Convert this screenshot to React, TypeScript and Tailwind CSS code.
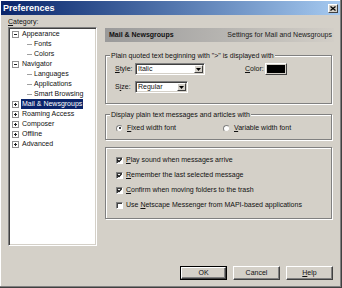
import React from "react";

const U = ({ c }: { c: string }) => <span className="underline underline-offset-[1px]">{c}</span>;

function Expander({ open }: { open: boolean }) {
  return (
    <svg width="7" height="7" viewBox="0 0 7 7" className="shrink-0">
      <rect x="0.5" y="0.5" width="6" height="6" fill="#fff" stroke="#909090" />
      <line x1="2" y1="3.5" x2="5" y2="3.5" stroke="#202020" />
      {!open && <line x1="3.5" y1="2" x2="3.5" y2="5" stroke="#202020" />}
    </svg>
  );
}

type Node = { label: React.ReactNode; level: 0 | 1; open?: boolean; sel?: boolean };

const nodes: Node[] = [
  { label: "Appearance", level: 0, open: true },
  { label: "Fonts", level: 1 },
  { label: "Colors", level: 1 },
  { label: "Navigator", level: 0, open: true },
  { label: "Languages", level: 1 },
  { label: "Applications", level: 1 },
  { label: "Smart Browsing", level: 1 },
  { label: "Mail & Newsgroups", level: 0, open: false, sel: true },
  { label: "Roaming Access", level: 0, open: false },
  { label: "Composer", level: 0, open: false },
  { label: "Offline", level: 0, open: false },
  { label: "Advanced", level: 0, open: false },
];

function TreeRow({ n }: { n: Node }) {
  if (n.level === 0) {
    return (
      <div className="h-[10px] flex items-center pl-[3px]">
        <Expander open={!!n.open} />
        <span
          className={`ml-[2px] px-[1px] leading-[10px] h-[10px] whitespace-nowrap ${
            n.sel ? "bg-[#0a246a] text-white" : ""
          }`}
        >
          {n.label}
        </span>
      </div>
    );
  }
  return (
    <div className="h-[10px] flex items-center pl-[18px]">
      <div className="w-[5px] border-t border-[#a0a0a0]" />
      <span className="ml-[2px] leading-[10px] whitespace-nowrap">{n.label}</span>
    </div>
  );
}

function Select({ value, w }: { value: React.ReactNode; w: string }) {
  return (
    <div
      className={`${w} h-[12px] bg-white border border-t-[#808080] border-l-[#808080] border-b-white border-r-white shadow-[inset_1px_1px_0_#404040,inset_-1px_-1px_0_#d4d0c8] flex items-center`}
    >
      <span className="flex-1 pl-[2px] leading-[10px]">{value}</span>
      <div className="w-[9px] h-[8px] mr-[1px] bg-[#d4d0c8] border border-t-white border-l-white border-b-[#404040] border-r-[#404040] flex items-center justify-center">
        <svg width="5" height="3" viewBox="0 0 5 3">
          <polygon points="0,0 5,0 2.5,3" fill="#000" />
        </svg>
      </div>
    </div>
  );
}

function Check({ checked, children }: { checked: boolean; children: React.ReactNode }) {
  return (
    <div className="h-[15px] flex items-center">
      <div className="w-[7px] h-[7px] bg-white border border-t-[#808080] border-l-[#808080] border-b-white border-r-white shadow-[inset_1px_1px_0_#404040] flex items-center justify-center">
        {checked && (
          <svg width="5" height="5" viewBox="0 0 5 5">
            <polyline points="0.5,2 2,3.6 4.6,0.8" fill="none" stroke="#000" strokeWidth="1.2" />
          </svg>
        )}
      </div>
      <span className="ml-[3px] whitespace-nowrap">{children}</span>
    </div>
  );
}

function Radio({ on, children }: { on: boolean; children: React.ReactNode }) {
  return (
    <div className="flex items-center">
      <div className="w-[7px] h-[7px] rounded-full bg-white border border-t-[#808080] border-l-[#808080] border-b-[#d4d0c8] border-r-[#d4d0c8] flex items-center justify-center">
        {on && <div className="w-[2px] h-[2px] rounded-full bg-black" />}
      </div>
      <span className="ml-[4px] whitespace-nowrap">{children}</span>
    </div>
  );
}

function Button({ children, def }: { children: React.ReactNode; def?: boolean }) {
  return (
    <div className={`h-[14px] w-[47px] ${def ? "border border-black" : ""}`}>
      <div
        className={`w-full h-full bg-[#d4d0c8] border border-t-white border-l-white border-b-[#404040] border-r-[#404040] shadow-[inset_-1px_-1px_0_#808080] flex items-center justify-center leading-[10px]`}
      >
        {children}
      </div>
    </div>
  );
}

function Group({
  legend,
  className,
  children,
}: {
  legend?: React.ReactNode;
  className: string;
  children: React.ReactNode;
}) {
  return (
    <div
      className={`relative border border-[#808080] shadow-[inset_1px_1px_0_#fff,1px_1px_0_#fff] ${className}`}
    >
      {legend && (
        <span className="absolute -top-[5px] left-[4px] px-[1px] bg-[#d4d0c8] leading-[9px] whitespace-nowrap">
          {legend}
        </span>
      )}
      {children}
    </div>
  );
}

export default function App() {
  return (
    <div className="w-[342px] h-[288px] bg-[#d4d0c8] overflow-hidden font-['Liberation_Sans',Arial,sans-serif] text-[7px] text-[#111] border-r border-b border-r-[#404040] border-b-[#404040] shadow-[inset_-1px_-1px_0_#808080,inset_1px_1px_0_#fff] flex flex-col">
      {/* Title bar */}
      <div className="h-[14px] mx-[1px] mt-[1px] bg-gradient-to-r from-[#0a246a] to-[#a6caf0] flex items-center justify-between pl-[2px] pr-[2px]">
        <span className="text-white font-bold text-[9px] leading-[12px]">Preferences</span>
        <div className="w-[10px] h-[9px] bg-[#d4d0c8] border border-t-white border-l-white border-b-[#404040] border-r-[#404040] flex items-center justify-center">
          <svg width="6" height="5" viewBox="0 0 6 5">
            <line x1="0.5" y1="0.5" x2="5.5" y2="4.5" stroke="#000" strokeWidth="1.2" />
            <line x1="5.5" y1="0.5" x2="0.5" y2="4.5" stroke="#000" strokeWidth="1.2" />
          </svg>
        </div>
      </div>

      <div className="flex flex-1">
        {/* Left column */}
        <div className="ml-[8px] w-[89px] pt-[2px] flex flex-col">
          <div className="h-[10px] leading-[10px]">
            <U c="C" />
            ategory:
          </div>
          <div className="h-[219px] bg-white border border-t-[#808080] border-l-[#808080] border-b-white border-r-white shadow-[inset_1px_1px_0_#404040,inset_-1px_-1px_0_#d4d0c8] pt-[1px]">
            {nodes.map((n, i) => (
              <TreeRow key={i} n={n} />
            ))}
          </div>
        </div>

        {/* Right column */}
        <div className="ml-[8px] w-[229px] pt-[13px] flex flex-col">
          <div className="h-[14px] bg-gradient-to-r from-[#9a9a9a] to-[#d2cec7] flex items-center justify-between pl-[4px] pr-[2px]">
            <span className="font-bold text-[#101010]">Mail &amp; Newsgroups</span>
            <span className="text-[#202020]">Settings for Mail and Newsgroups</span>
          </div>

          <Group
            className="mt-[13px] h-[49px] w-[227px] pt-[7px] pl-[9px]"
            legend={<>Plain quoted text beginning with "&gt;" is displayed with</>}
          >
            <div className="flex items-center h-[12px]">
              <span className="w-[20px]">
                <U c="S" />
                tyle:
              </span>
              <Select value="Italic" w="w-[70px]" />
              <span className="ml-[40px] w-[20px]">
                <U c="C" />
                olor:
              </span>
              <div className="w-[22px] h-[12px] bg-[#d4d0c8] border border-t-white border-l-white border-b-[#404040] border-r-[#404040] p-[1px]">
                <div className="w-full h-full bg-black" />
              </div>
            </div>
            <div className="flex items-center h-[12px] mt-[6px]">
              <span className="w-[20px]">
                S<U c="i" />
                ze:
              </span>
              <Select value="Regular" w="w-[53px]" />
            </div>
          </Group>

          <Group
            className="mt-[10px] h-[26px] w-[227px] pl-[10px] pt-[8px]"
            legend="Display plain text messages and articles with"
          >
            <div className="flex items-center h-[10px]">
              <div className="w-[107px]">
                <Radio on>
                  <U c="F" />
                  ixed width font
                </Radio>
              </div>
              <Radio on={false}>
                <U c="V" />
                ariable width font
              </Radio>
            </div>
          </Group>

          <Group className="mt-[7px] h-[72px] w-[227px] pl-[10px] pt-[5px]">
            <Check checked>
              <U c="P" />
              lay sound when messages arrive
            </Check>
            <Check checked>
              <U c="R" />
              emember the last selected message
            </Check>
            <Check checked>
              <U c="C" />
              onfirm when moving folders to the trash
            </Check>
            <Check checked={false}>
              Use <U c="N" />
              etscape Messenger from MAPI-based applications
            </Check>
          </Group>

          <div className="mt-auto mb-[7px] flex justify-end gap-[6px] pr-[1px]">
            <Button def>OK</Button>
            <Button>Cancel</Button>
            <Button>
              <U c="H" />
              elp
            </Button>
          </div>
        </div>
      </div>
    </div>
  );
}
